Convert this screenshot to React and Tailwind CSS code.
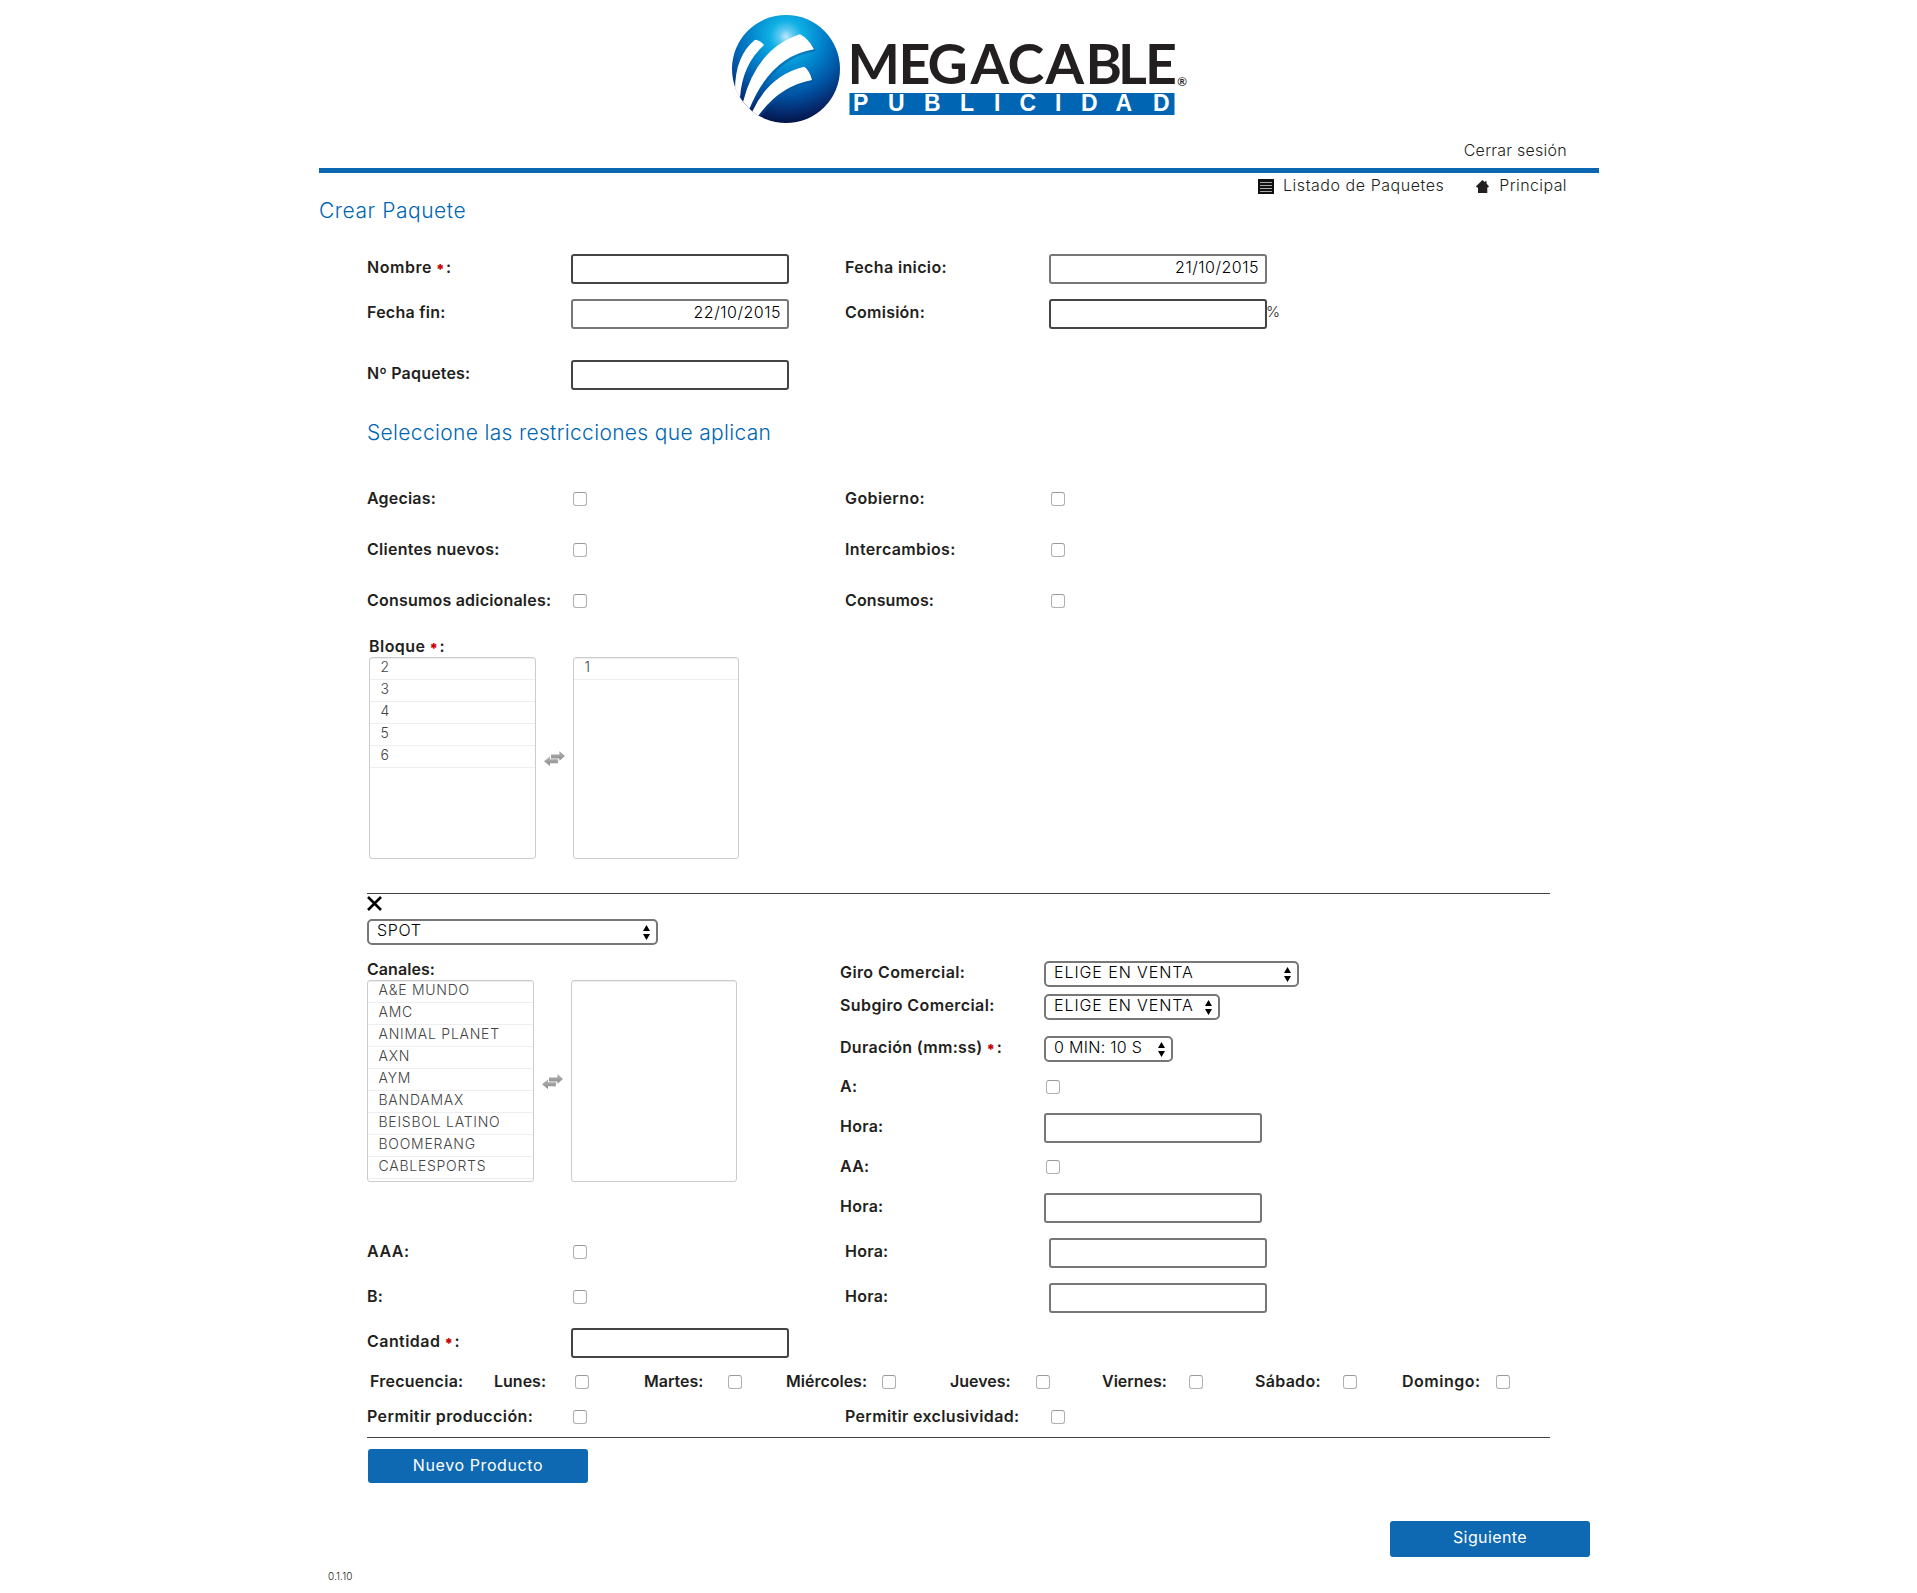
import React from "react";

const channels = [
  "A&E MUNDO",
  "AMC",
  "ANIMAL PLANET",
  "AXN",
  "AYM",
  "BANDAMAX",
  "BEISBOL LATINO",
  "BOOMERANG",
  "CABLESPORTS",
];

function Logo() {
  return (
    <svg width="460" height="120" viewBox="0 0 460 120" className="block">
      <defs>
        <radialGradient id="sphere" cx="0.5" cy="0.2" r="0.82">
          <stop offset="0" stopColor="#bfe8fb" />
          <stop offset="0.08" stopColor="#5cc8f0" />
          <stop offset="0.18" stopColor="#0fb0e4" />
          <stop offset="0.42" stopColor="#0083cc" />
          <stop offset="0.66" stopColor="#0054a4" />
          <stop offset="0.86" stopColor="#062a6e" />
          <stop offset="1" stopColor="#02103f" />
        </radialGradient>
        <clipPath id="ball">
          <circle cx="57" cy="59" r="54.2" />
        </clipPath>
      </defs>
      <circle cx="57" cy="59" r="54" fill="url(#sphere)" />
      <g clipPath="url(#ball)">
        <g fill="#00529b" opacity="0.45" transform="translate(2 2)">
          <path d="M71 24.3Q80 29 85 39.3Q42 46 20.3 97.3L15.3 91Q30 38 71 24.3Z" />
          <path d="M75.3 56.7Q81 61 83 70Q50 76 29.3 105L24 101Q40 65 75.3 56.7Z" />
        </g>
        <g fill="#fff">
          <path d="M26 29.7Q31 30 35 35Q13 55 11 88L6 80Q6 46 26 29.7Z" />
          <path d="M71 24.3Q80 29 85 39.3Q42 46 20.3 99L14 92Q28 38 71 24.3Z" />
          <path d="M75.3 56.7Q81 61 83 70Q50 76 28.5 107L23 102Q40 65 75.3 56.7Z" />
        </g>
      </g>
      <text x="118.5 169.5 198.5 241.5 278.5 316.5 356.5 389 416" y="74" fontFamily="Lato, sans-serif" fontWeight="700" fontSize="55.5" fill="#231f20">
        MEGACABLE
      </text>
      <text x="448.5" y="75.5" fontFamily="Liberation Sans, sans-serif" fontWeight="700" fontSize="12.5" fill="#231f20">
        ®
      </text>
      <rect x="120.5" y="83" width="325" height="22" fill="#0066b3" />
      <text x="124 159 195 231 265 290.5 326 352 386.5 424" y="101.2" fontFamily="Liberation Sans, sans-serif" fontWeight="700" fontSize="23" fill="#fff">
        PUBLICIDAD
      </text>
    </svg>
  );
}

function Label({ children, required, className = "", spacing = "tracking-[0.25px]" }) {
  return (
    <div className={`h-6 whitespace-nowrap text-[16px] leading-6 font-semibold text-[#231f20] ${spacing} ${className}`}>
      {children}
      {required && (
        <span className="tracking-normal">
          {" "}
          <span className="mr-[1.5px] inline-block translate-y-[1.5px] text-[14px] leading-none font-black text-[#c00]">*</span>:
        </span>
      )}
    </div>
  );
}

function Field({ dark, value }) {
  return (
    <div
      className={`h-[30px] w-[218px] shrink-0 rounded-[3px] border-2 bg-white pr-[6px] text-right text-[16px] leading-[22px] font-light text-black ${
        dark ? "border-[#444]" : "border-[#777]"
      }`}
    >
      <span className="tracking-[0.5px]">{value}</span>
    </div>
  );
}

function Check({ className = "mt-[6px] ml-[2px]" }) {
  return <div className={`size-[14px] shrink-0 rounded-[3px] border border-[#b0b0b0] border-t-[#999] bg-white ${className}`} />;
}

function Select({ children, className, spacing }) {
  return (
    <div className={`flex h-[26px] justify-between rounded-[5px] border-2 border-[#777] bg-white pr-[6px] pl-2 ${className}`}>
      <span className={`-mt-[3px] text-[16px] leading-6 font-light whitespace-nowrap text-black ${spacing}`}>{children}</span>
      <svg width="7" height="15" viewBox="0 0 7 15" className="mt-[3.5px] shrink-0" fill="#000">
        <path d="M3.5 0L7 6H0zM3.5 15L0 9H7z" />
      </svg>
    </div>
  );
}

function SwapIcon() {
  return (
    <svg width="21" height="15" viewBox="0 0 21 15">
      <defs>
        <linearGradient id="arrow" x1="0" y1="0" x2="0" y2="1">
          <stop offset="0" stopColor="#b4b4b4" />
          <stop offset="1" stopColor="#8c8c8c" />
        </linearGradient>
      </defs>
      <path d="M7 3.4h8.4V0L21 5.1l-5.6 4.7V7.5H7z" fill="url(#arrow)" />
      <path d="M14 8.3H6V5.6L0 10.2 6 15v-2.7h8z" fill="url(#arrow)" />
    </svg>
  );
}

function List({ items, width }) {
  return (
    <div className={`h-[202px] overflow-hidden rounded-[3px] border border-[#ccc] bg-white shadow-[inset_0_1px_1px_rgba(0,0,0,0.075)] ${width}`}>
      {items.map((item) => (
        <div key={item} className="h-[22px] border-b border-[#eee] pl-[10.5px] text-[14px] leading-[18px] font-light tracking-[0.75px] text-[#444]">
          {item}
        </div>
      ))}
    </div>
  );
}

function DualList({ left, right }) {
  return (
    <div className="flex">
      <List items={left} width="w-[167px]" />
      <div className="w-[37px] pt-[94px] pl-2">
        <SwapIcon />
      </div>
      <List items={right} width="w-[166px]" />
    </div>
  );
}

function Row({ className = "", children }) {
  return <div className={`grid grid-cols-[204px_274px_204px_auto] items-start ${className}`}>{children}</div>;
}

function SideRow({ className, children }) {
  return <div className={`grid grid-cols-[204px_auto] items-start ${className}`}>{children}</div>;
}

function Heading({ children, className }) {
  return <h2 className={`h-[30px] text-[21px] font-light whitespace-nowrap text-[#0066b3] ${className}`}>{children}</h2>;
}

export default function App() {
  return (
    <div className="h-[1593px] w-[1917px] overflow-hidden bg-white font-['Inter',sans-serif]">
      <div className="ml-[319px] w-[1280px]">
        <header className="flex h-[173px] flex-col border-b-[5px] border-[#0b67b2] pt-[10px]">
          <div className="flex h-[128px] justify-center">
            <Logo />
          </div>
          <a className="mr-8 self-end text-[16px] leading-6 font-light tracking-[0.25px] text-[#231f20]">Cerrar sesión</a>
        </header>

        <nav className="flex h-[22px] justify-end pr-8 text-[16px] leading-6 font-light text-[#231f20]">
          <div className="flex">
            <svg width="16" height="15" viewBox="0 0 16 15" className="mt-[6px] mr-[9px]">
              <rect width="16" height="15" fill="#111" />
              <path d="M2 3.5H14M2 6.5H14M2 9.5H14M2 12.5H14" stroke="#aaa" strokeWidth="1" />
            </svg>
            <a className="tracking-[0.54px]">Listado de Paquetes</a>
          </div>
          <div className="ml-8 flex">
            <svg width="13" height="13" viewBox="0 0 13 13" className="mt-[7px] mr-[10px]" fill="#231f20">
              <path d="M6.5 0L9 2.2V1.2h1.6v2.5L13 6.3 12 7.6h-.7V13H2V7.6H.8L0 6.3z" />
            </svg>
            <a className="tracking-[0.4px]">Principal</a>
          </div>
        </nav>

        <Heading className="leading-[31px] tracking-[0.55px]">Crear Paquete</Heading>

        <main className="ml-12 w-[1183px] pt-[29px]">
          <Row className="h-[45px]">
            <Label required className="pt-px" spacing="tracking-[0.55px]">Nombre</Label>
            <Field dark />
            <Label className="pt-px" spacing="tracking-[0.37px]">Fecha inicio:</Label>
            <Field value="21/10/2015" />
          </Row>
          <Row className="h-[61px]">
            <Label className="pt-px">Fecha fin:</Label>
            <Field value="22/10/2015" />
            <Label className="pt-px">Comisión:</Label>
            <div className="flex">
              <Field dark />
              <span className="-ml-px pt-px text-[15px] leading-6 font-light text-[#231f20]">%</span>
            </div>
          </Row>
          <Row className="h-[58px]">
            <Label className="pt-px" spacing="tracking-[0.18px]">Nº Paquetes:</Label>
            <Field dark />
          </Row>

          <Heading className="leading-[29px] tracking-[0.33px]">Seleccione las restricciones que aplican</Heading>

          <Row className="mt-[38px] h-[51px]">
            <Label spacing="tracking-[0.2px]">Agecias:</Label>
            <Check />
            <Label spacing="tracking-[0.4px]">Gobierno:</Label>
            <Check />
          </Row>
          <Row className="h-[51px]">
            <Label>Clientes nuevos:</Label>
            <Check />
            <Label spacing="tracking-[0.35px]">Intercambios:</Label>
            <Check />
          </Row>
          <Row className="h-[46px]">
            <Label spacing="tracking-[0.2px]">Consumos adicionales:</Label>
            <Check />
            <Label spacing="tracking-[0.12px]">Consumos:</Label>
            <Check />
          </Row>

          <section className="ml-[2px] h-[259px]">
            <Label required className="h-[23px]" spacing="tracking-[0.45px]">Bloque</Label>
            <DualList left={["2", "3", "4", "5", "6"]} right={["1"]} />
          </section>

          <section className="border-y border-[#444] pt-[2px]">
            <svg width="15" height="15" viewBox="0 0 15 15" className="block">
              <path d="M1 1L14 14M14 1L1 14" stroke="#000" strokeWidth="2.6" />
            </svg>
            <Select className="mt-2 w-[291px]" spacing="tracking-[0.7px]">SPOT</Select>

            <div className="flex h-[294px]">
              <div className="w-[474px] pt-3">
                <Label className="h-[23px]" spacing="tracking-[0.05px]">Canales:</Label>
                <DualList left={channels} right={[]} />
              </div>
              <div className="-ml-px pt-4">
                <SideRow className="h-[33px]">
                  <Label className="-mt-px" spacing="tracking-[0.4px]">Giro Comercial:</Label>
                  <Select className="w-[255px]" spacing="tracking-[0.92px]">ELIGE EN VENTA</Select>
                </SideRow>
                <SideRow className="h-[42px]">
                  <Label className="-mt-px" spacing="tracking-[0.4px]">Subgiro Comercial:</Label>
                  <Select className="w-[176px]" spacing="tracking-[0.92px]">ELIGE EN VENTA</Select>
                </SideRow>
                <SideRow className="h-[38px]">
                  <Label required className="-mt-px" spacing="tracking-[0.32px]">Duración (mm:ss)</Label>
                  <Select className="w-[129px]" spacing="tracking-[0.3px]">0 MIN: 10 S</Select>
                </SideRow>
                <SideRow className="h-[39px]">
                  <Label>A:</Label>
                  <Check />
                </SideRow>
                <SideRow className="h-[41px]">
                  <Label className="pt-px">Hora:</Label>
                  <Field />
                </SideRow>
                <SideRow className="h-[39px]">
                  <Label>AA:</Label>
                  <Check />
                </SideRow>
                <SideRow className="h-[45px]">
                  <Label className="pt-px">Hora:</Label>
                  <Field />
                </SideRow>
              </div>
            </div>

            <Row className="mt-[-1px] h-[45px]">
              <Label className="pt-px" spacing="tracking-[0.5px]">AAA:</Label>
              <Check className="mt-[7px] ml-[2px]" />
              <Label className="pt-px">Hora:</Label>
              <Field />
            </Row>
            <Row className="h-[45px]">
              <Label className="pt-px">B:</Label>
              <Check className="mt-[7px] ml-[2px]" />
              <Label className="pt-px">Hora:</Label>
              <Field />
            </Row>
            <Row className="h-[41px]">
              <Label required className="pt-px" spacing="tracking-[0.45px]">Cantidad</Label>
              <Field dark />
            </Row>
            <div className="grid h-[35px] grid-cols-[124px_81px_69px_84px_58px_96px_68px_86px_66px_87px_66px_88px_59px_95px_14px] items-start pl-[3px]">
              <Label>Frecuencia:</Label>
              <Label spacing="tracking-normal">Lunes:</Label>
              <Check className="mt-[6px]" />
              <Label spacing="tracking-normal">Martes:</Label>
              <Check className="mt-[6px]" />
              <Label spacing="tracking-normal">Miércoles:</Label>
              <Check className="mt-[6px]" />
              <Label spacing="tracking-normal">Jueves:</Label>
              <Check className="mt-[6px]" />
              <Label spacing="tracking-normal">Viernes:</Label>
              <Check className="mt-[6px]" />
              <Label spacing="tracking-[0.3px]">Sábado:</Label>
              <Check className="mt-[6px]" />
              <Label spacing="tracking-[0.5px]">Domingo:</Label>
              <Check className="mt-[6px] -ml-px" />
            </div>
            <Row className="h-[33px]">
              <Label spacing="tracking-[0.42px]">Permitir producción:</Label>
              <Check />
              <Label spacing="tracking-[0.34px]">Permitir exclusividad:</Label>
              <Check />
            </Row>
          </section>

          <button className="mt-[11px] ml-px block h-[34px] w-[220px] rounded-[3px] bg-[#0e68b2] pb-[2px] text-[16px] leading-[32px] tracking-[0.6px] text-white">
            Nuevo Producto
          </button>
        </main>

        <button className="mt-[38px] ml-[1071px] block h-9 w-[200px] rounded-[3px] bg-[#0e68b2] pb-[4px] text-[16px] leading-[32px] tracking-[0.4px] text-white">
          Siguiente
        </button>
        <footer className="mt-[11px] ml-[9px] text-[10px] leading-4 font-light tracking-[0.1px] text-[#231f20]">0.1.10</footer>
      </div>
    </div>
  );
}
